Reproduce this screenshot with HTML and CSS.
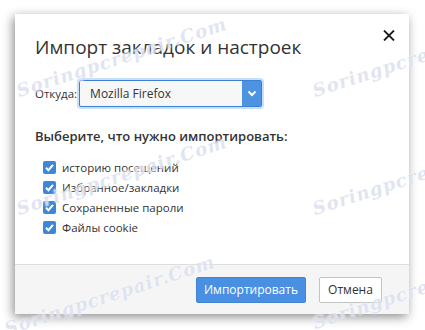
FILE: index.html
```html
<!DOCTYPE html>
<html lang="ru">
<head>
    <meta charset="UTF-8">
    <title>Импорт закладок и настроек</title>
    <link rel="stylesheet" href="styles.css">
</head>
<body>
    <div class="dialog">
        <div class="dialog-header">
            <h1>Импорт закладок и настроек</h1>
            <button class="close" aria-label="Закрыть">
                <svg width="12" height="11" viewBox="0 0 12 11">
                    <path d="M1 0.5 L11 10.5 M11 0.5 L1 10.5" stroke="#1a1a1a" stroke-width="1.8" fill="none"/>
                </svg>
            </button>
        </div>
        <div class="dialog-body">
            <div class="source-row">
                <label for="source">Откуда:</label>
                <div class="select">
                    <span class="select-value">Mozilla Firefox</span>
                    <span class="select-arrow">
                        <svg width="10" height="7" viewBox="0 0 10 7">
                            <path d="M1.5 1.5 L5 5 L8.5 1.5" stroke="#fff" stroke-width="2" fill="none"/>
                        </svg>
                    </span>
                </div>
            </div>
            <h2>Выберите, что нужно импортировать:</h2>
            <ul class="options">
                <li><span class="check"></span>историю посещений</li>
                <li><span class="check"></span>Избранное/закладки</li>
                <li><span class="check"></span>Сохраненные пароли</li>
                <li><span class="check"></span>Файлы cookie</li>
            </ul>
        </div>
        <div class="dialog-footer">
            <button class="btn btn-primary">Импортировать</button>
            <button class="btn btn-cancel">Отмена</button>
        </div>
    </div>

    <!-- watermark -->
    <span class="mark" style="left: 20px; top: 82px;">Soringpcrepair.Com</span>
    <span class="mark" style="left: 20px; top: 200px;">Soringpcrepair.Com</span>
    <span class="mark" style="left: 8px; top: 320px;">Soringpcrepair.Com</span>
    <span class="mark" style="left: 316px; top: 82px;">Soringpcrep</span>
    <span class="mark" style="left: 316px; top: 200px;">Soringpcrep</span>
    <span class="mark" style="left: 316px; top: 314px;">Soringpcrep</span>
</body>
</html>
```
FILE: styles.css
```css
body {
    margin: 0;
    background: #fff;
    font-family: "Open Sans", "Noto Sans", Arial, sans-serif;
    color: #333;
    position: relative;
    width: 425px;
    height: 330px;
    overflow: hidden;
}
.dialog {
    margin: 14px 0 0 15px;
    width: 394px;
    height: 300px;
    background: #fff;
    box-shadow: -2px 3px 10px rgba(0, 0, 0, 0.45);
    display: flex;
    flex-direction: column;
}
.dialog-header {
    display: flex;
    justify-content: space-between;
    padding: 20px 14px 0 20px;
}
h1 {
    margin: 0;
    font-size: 19px;
    font-weight: 400;
    color: #333;
}
.close {
    background: none;
    border: none;
    padding: 0;
    width: 12px;
    height: 11px;
    margin-top: -5px;
    cursor: pointer;
}
.dialog-body {
    padding: 0 20px;
    font-size: 11.5px;
}
.source-row {
    display: flex;
    align-items: center;
    margin-top: 20px;
}
.source-row label {
    margin-right: 2px;
}
.select {
    display: flex;
    width: 181px;
    height: 25px;
    border: 1px solid #3b7fd6;
    box-shadow: 0 0 0 2px #c9dff7;
    border-radius: 2px;
    background: #f7f7f7;
}
.select-value {
    flex: 1;
    padding-left: 10px;
    line-height: 25px;
    font-size: 12px;
}
.select-arrow {
    width: 19px;
    background: #4c93e0;
    display: flex;
    align-items: center;
    justify-content: center;
}
h2 {
    margin: 20px 0 12px;
    font-size: 13px;
    font-weight: 600;
}
.options {
    list-style: none;
    margin: 0;
    padding: 0 0 0 8px;
}
.options li {
    display: flex;
    align-items: center;
    height: 20px;
}
.check {
    width: 13px;
    height: 13px;
    margin-right: 6px;
    border-radius: 2px;
    background: #3d86d8 url("data:image/svg+xml;utf8,<svg xmlns='http://www.w3.org/2000/svg' viewBox='0 0 13 13'><path d='M3 6.8 L5.4 9.2 L10 3.8' stroke='white' stroke-width='2' fill='none'/></svg>") center / 13px 13px no-repeat;
}
.dialog-footer {
    margin-top: auto;
    height: 49px;
    border-top: 1px solid #ddd;
    background: #f5f5f5;
    display: flex;
    justify-content: flex-end;
    align-items: center;
    gap: 13px;
    padding-right: 27px;
}
.btn {
    height: 26px;
    padding: 0;
    font-family: inherit;
    font-size: 12px;
    color: #333;
    background: #fff;
    border: 1px solid #c4c4c4;
    border-radius: 2px;
}
.btn-primary {
    width: 110px;
    background: #4a90e2;
    border-color: #4384d4;
    color: #fff;
}
.btn-cancel {
    width: 63px;
}
.mark {
    position: absolute;
    font-family: "DejaVu Serif", serif;
    font-style: italic;
    font-weight: bold;
    font-size: 18px;
    letter-spacing: 1px;
    color: rgba(175, 185, 220, 0.4);
    text-shadow: 0 0 2px #fff;
    transform: rotate(-18deg);
    transform-origin: left bottom;
    white-space: nowrap;
    line-height: 1;
    pointer-events: none;
}
```
